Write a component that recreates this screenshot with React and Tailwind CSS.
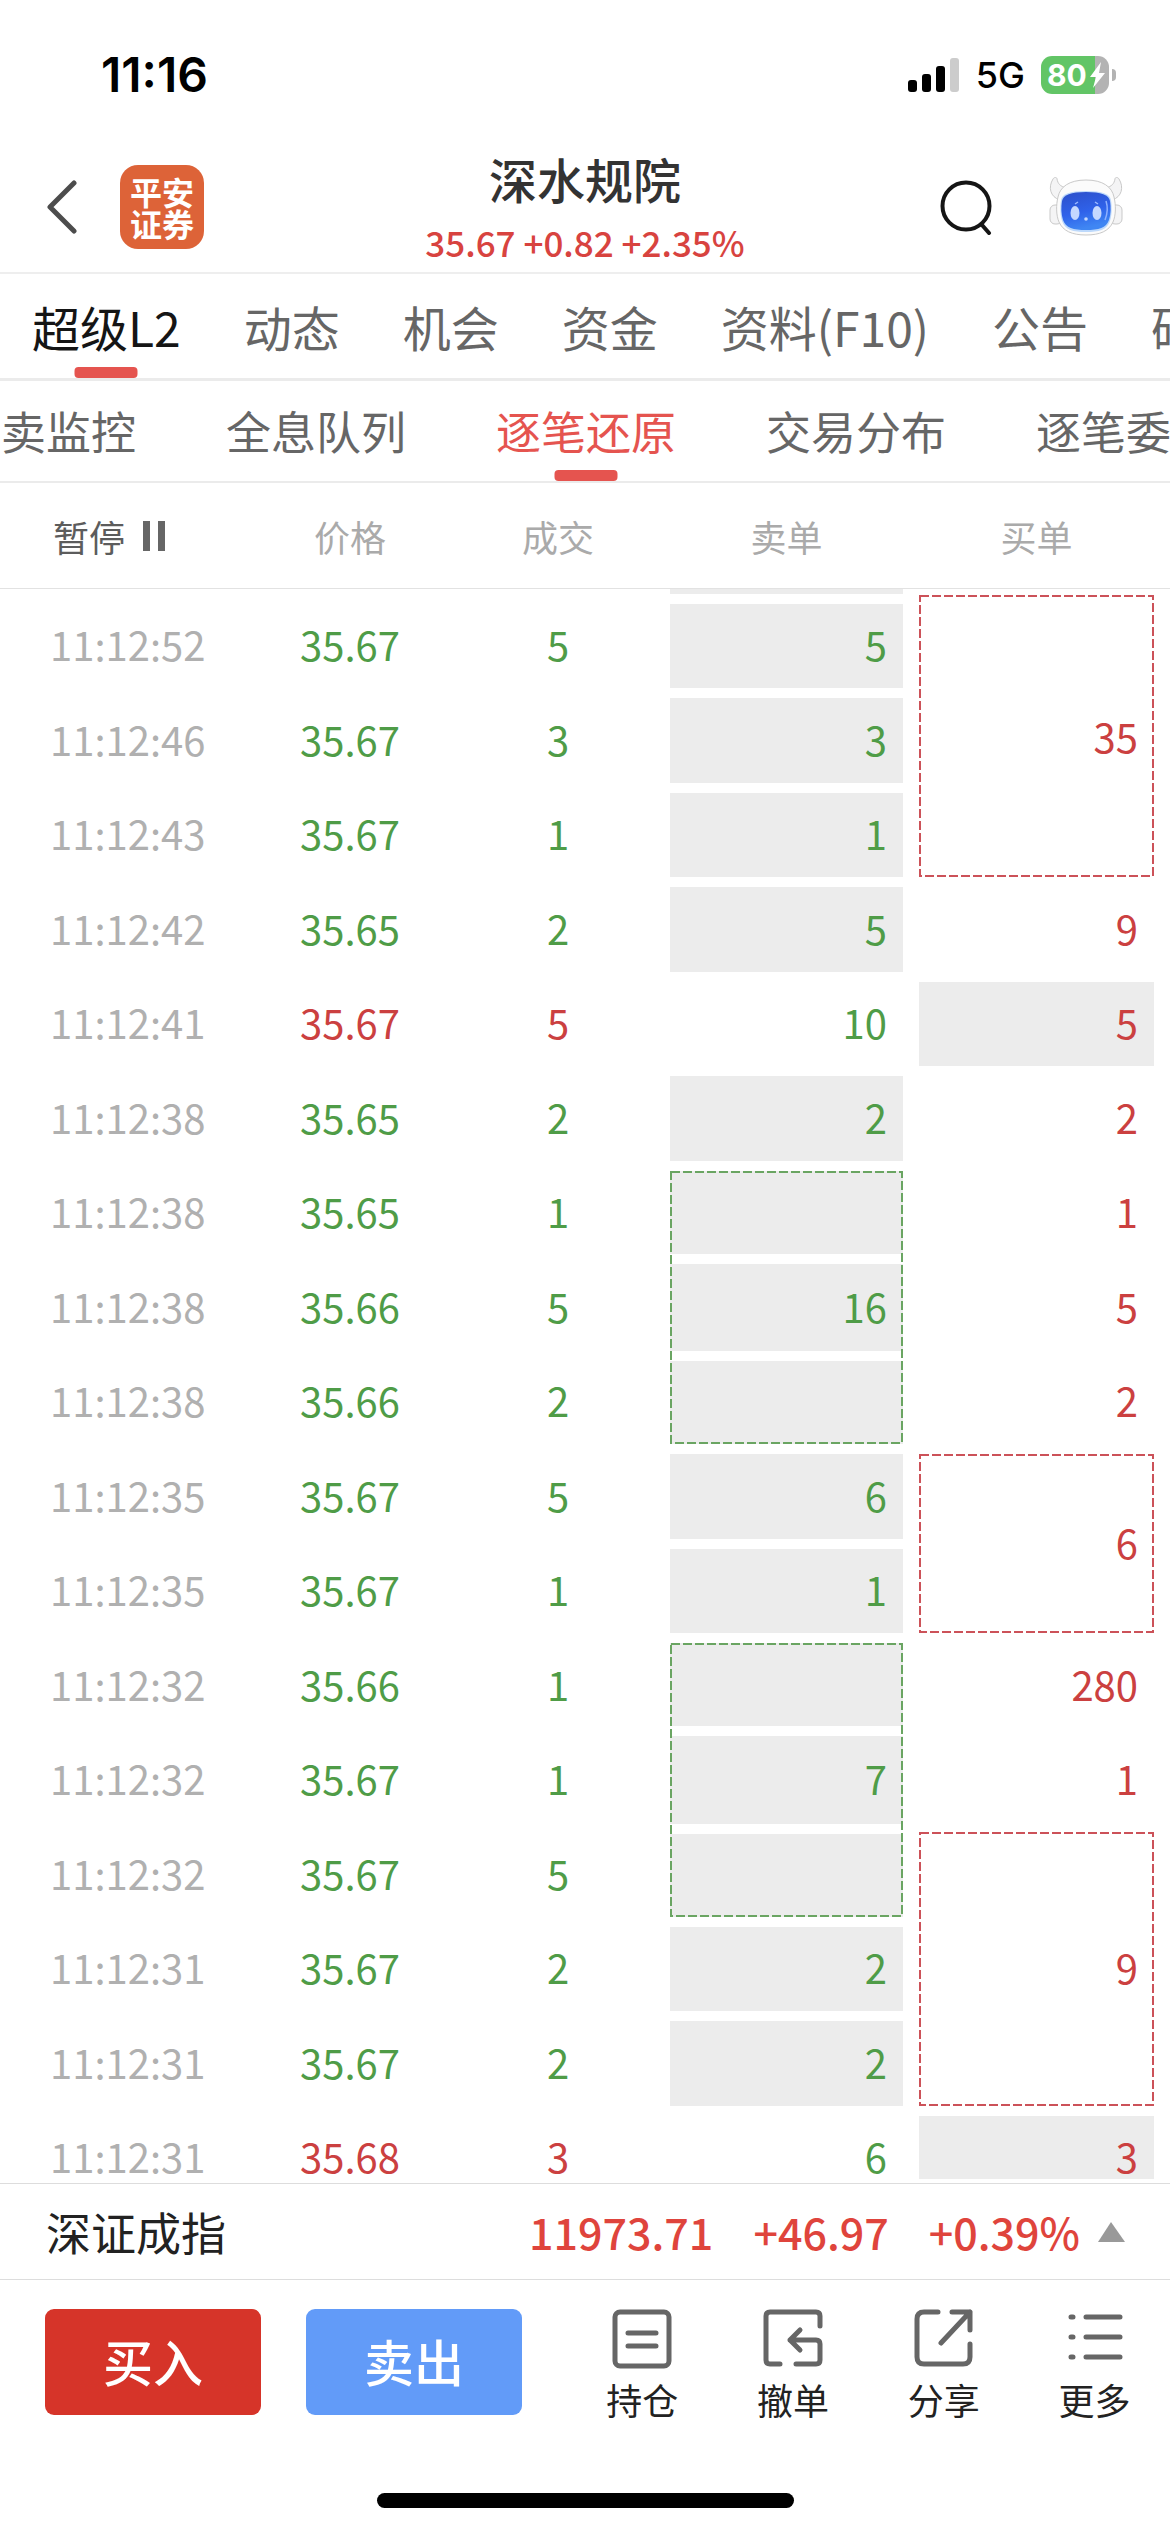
import React from "react";

const primaryTabs = ["超级L2", "动态", "机会", "资金", "资料(F10)", "公告", "研报"];
const secondaryTabs = ["买卖监控", "全息队列", "逐笔还原", "交易分布", "逐笔委托"];

// sell / buy: v = volume, fill = shaded block, span = rows merged in a dashed frame
const rows = [
  { t: "11:12:52", p: "35.67", n: 5, sell: { v: 5, fill: true } },
  { t: "11:12:46", p: "35.67", n: 3, sell: { v: 3, fill: true } },
  { t: "11:12:43", p: "35.67", n: 1, sell: { v: 1, fill: true } },
  { t: "11:12:42", p: "35.65", n: 2, sell: { v: 5, fill: true }, buy: { v: 9 } },
  { t: "11:12:41", p: "35.67", n: 5, up: true, sell: { v: 10 }, buy: { v: 5, fill: true } },
  { t: "11:12:38", p: "35.65", n: 2, sell: { v: 2, fill: true }, buy: { v: 2 } },
  { t: "11:12:38", p: "35.65", n: 1, sell: { v: 16, span: 3 }, buy: { v: 1 } },
  { t: "11:12:38", p: "35.66", n: 5, buy: { v: 5 } },
  { t: "11:12:38", p: "35.66", n: 2, buy: { v: 2 } },
  { t: "11:12:35", p: "35.67", n: 5, sell: { v: 6, fill: true }, buy: { v: 6, span: 2 } },
  { t: "11:12:35", p: "35.67", n: 1, sell: { v: 1, fill: true } },
  { t: "11:12:32", p: "35.66", n: 1, sell: { v: 7, span: 3 }, buy: { v: 280 } },
  { t: "11:12:32", p: "35.67", n: 1, buy: { v: 1 } },
  { t: "11:12:32", p: "35.67", n: 5, buy: { v: 9, span: 3 } },
  { t: "11:12:31", p: "35.67", n: 2, sell: { v: 2, fill: true } },
  { t: "11:12:31", p: "35.67", n: 2, sell: { v: 2, fill: true } },
  { t: "11:12:31", p: "35.68", n: 3, up: true, sell: { v: 6 }, buy: { v: 3, fill: true } },
];

const spanClass = { 2: "row-span-2", 3: "row-span-3" };

function Dashes({ color }) {
  return (
    <svg className="pointer-events-none absolute inset-0 h-full w-full" aria-hidden="true">
      <rect x="1" y="1" className="h-[calc(100%-2px)] w-[calc(100%-2px)]" fill="none" stroke={color} strokeWidth="2" strokeDasharray="9 3" />
    </svg>
  );
}

function SellCell({ cell }) {
  if (cell.span) {
    return (
      <td rowSpan={3} className="row-span-3 px-2 py-[5px] text-[#4f9c47]">
        <div className="relative flex h-full flex-col gap-[10px]">
          <div className="flex-1 bg-[#ececec]" />
          <div className="flex flex-1 items-center justify-end bg-[#ececec] pr-4 pb-1">{cell.v}</div>
          <div className="flex-1 bg-[#ececec]" />
          <Dashes color="#6aa562" />
        </div>
      </td>
    );
  }
  return (
    <td className="px-2 py-[5px] text-[#4f9c47]">
      <div className={`flex h-full items-center justify-end pr-4 pb-1 ${cell.fill ? "bg-[#ececec]" : ""}`}>{cell.v}</div>
    </td>
  );
}

function BuyCell({ cell }) {
  return (
    <td rowSpan={cell.span || 1} className={`py-[5px] pr-4 pl-2 text-[#cb4040] ${spanClass[cell.span] || ""}`}>
      <div className={`relative flex h-full items-center justify-end pr-4 pb-1 ${cell.fill ? "bg-[#ececec]" : ""}`}>
        {cell.v}
        {cell.span && <Dashes color="#cc5259" />}
      </div>
    </td>
  );
}

function StatusBar() {
  return (
    <div className="flex h-[142px] shrink-0 items-center justify-between pt-2 pr-[54px] pl-[101px] font-['Inter',sans-serif] text-black">
      <span className="text-[48px] font-semibold">11:16</span>
      <div className="flex items-center">
        <svg width="52" height="36" viewBox="0 0 52 36" aria-label="信号">
          <rect x="0" y="23" width="9" height="12" rx="3" />
          <rect x="14" y="17" width="9" height="18" rx="3" />
          <rect x="28" y="9" width="9" height="26" rx="3" />
          <rect x="42" y="1" width="9" height="34" rx="3" fill="#cccccc" />
        </svg>
        <span className="ml-4 text-[36px] font-medium">5G</span>
        <div className="ml-4 flex items-center gap-[3px]">
          <div className="flex h-[38px] w-[68px] items-center gap-0.5 rounded-[11px] bg-linear-to-r from-[#62c566] from-80% to-[#b3b3b3] to-80% pl-1.5 text-[30px] font-bold text-white">
            80
            <svg width="17" height="26" viewBox="0 0 17 26" aria-hidden="true" className="shrink-0">
              <path d="M12 0 1 15h6L4 26 16 11h-6z" fill="#fff" />
            </svg>
          </div>
          <div className="h-3 w-1 rounded-r-full bg-[#b3b3b3]" />
        </div>
      </div>
    </div>
  );
}

function Robot() {
  return (
    <svg width="74" height="60" viewBox="0 0 74 60" aria-hidden="true">
      <defs>
        <linearGradient id="visor" x1="0" y1="0" x2="0.3" y2="1">
          <stop offset="0" stopColor="#2c4fc9" />
          <stop offset="0.6" stopColor="#2f62ea" />
          <stop offset="1" stopColor="#3f86f3" />
        </linearGradient>
      </defs>
      <g fill="#f4f4f5" stroke="#c9c9c9" strokeWidth="1">
        <path d="M11 23C1 20-1 10 4 2c1-2 4-2 4 0 1 5 3 7 9 9z" />
        <path d="M63 23c10-3 12-13 7-21-1-2-4-2-4 0-1 5-3 7-9 9z" />
        <rect x="1" y="28" width="12" height="19" rx="5" />
        <rect x="61" y="28" width="12" height="19" rx="5" />
        <path d="M37 3c17 0 26 7 28 17 2 8 2 18-1 25-4 9-13 13-27 13S14 54 10 45C7 38 7 28 9 20 11 10 20 3 37 3z" fill="#fbfbfb" />
      </g>
      <path d="M37 14c16 0 24 3 25 9s1 15-1 21c-3 9-11 11-24 11s-21-2-24-11c-2-6-2-15-1-21s9-9 25-9z" fill="#bdd9fb" />
      <path d="M37 15c15 0 23 3 24 9s1 13-1 19c-3 8-10 10-23 10s-20-2-23-10c-2-6-2-13-1-19s9-9 24-9z" fill="url(#visor)" />
      <path d="M57 24c2 6 1 14-1 19" stroke="#8fb1ff" strokeWidth="1.5" fill="none" />
      <g fill="#c5d8ff">
        <ellipse cx="26" cy="36" rx="4.5" ry="7" />
        <ellipse cx="48" cy="36" rx="4.5" ry="7" />
        <circle cx="37" cy="42" r="1.8" />
      </g>
      <path d="M26 27l3-2M46 25l3 2" stroke="#9dbaff" strokeWidth="1.5" />
    </svg>
  );
}

function Header() {
  return (
    <header className="grid shrink-0 grid-cols-[1fr_auto_1fr] items-center border-b-2 border-[#eeeeee]">
      <div className="flex items-center gap-[43px] pl-[46px]">
        <button aria-label="返回">
          <svg width="31" height="54" viewBox="0 0 31 54" fill="none" stroke="#4c4c4c" strokeWidth="5" strokeLinecap="round" strokeLinejoin="round">
            <path d="M28 3 4 27l24 24" />
          </svg>
        </button>
        <div className="flex h-[84px] w-[84px] items-center justify-center rounded-[18px] bg-[#dd6338] text-center text-[32px] leading-[32px] font-bold text-white">
          平安
          <br />
          证券
        </div>
      </div>
      <div className="h-[130px] pt-1 text-center">
        <h1 className="text-[48px] leading-[64px] font-medium text-[#333333]">深水规院</h1>
        <p className="text-[35px] leading-[64px] font-medium text-[#d8433f]">35.67 +0.82 +2.35%</p>
      </div>
      <div className="flex items-center justify-end gap-[56px] pr-[47px]">
        <button aria-label="搜索">
          <svg width="53" height="55" viewBox="0 0 53 55" fill="none" stroke="#151515" strokeWidth="4" strokeLinecap="round">
            <circle cx="26" cy="26" r="23.5" />
            <path d="m42 45 7 8" />
          </svg>
        </button>
        <button aria-label="智能助手">
          <Robot />
        </button>
      </div>
    </header>
  );
}

function Tab({ label, active, activeText }) {
  return (
    <button className={`relative flex h-full shrink-0 items-center justify-center whitespace-nowrap ${active ? activeText : "text-[#666666]"}`}>
      {label}
      {active && <span className="absolute bottom-0 left-1/2 h-[11px] w-[63px] -translate-x-1/2 rounded-[4px] bg-[#e5544f]" />}
    </button>
  );
}

const actions = [
  {
    label: "持仓",
    icon: (
      <>
        <rect x="3" y="3" width="54" height="54" rx="5" />
        <path d="M16 24h28M16 37h28" />
      </>
    ),
  },
  {
    label: "撤单",
    icon: (
      <>
        <path d="M57 17V7q0-4-4-4H7Q3 3 3 7v44q0 4 4 4h10" />
        <path d="M33 55h20q4 0 4-4V35q0-4-4-4H27M37 21 27 31l10 10" />
      </>
    ),
  },
  {
    label: "分享",
    icon: (
      <>
        <path d="M24 3H10Q3 3 3 10v38q0 7 7 7h39q7 0 7-7V35" />
        <path d="M38 3h18v18M56 3 27 34" />
      </>
    ),
  },
  {
    label: "更多",
    icon: <path d="M6 8h2M6 28h2M6 48h2M21 8h34M21 28h34M21 48h34" />,
  },
];

export default function App() {
  return (
    <div className="flex h-screen flex-col overflow-hidden bg-white font-['Noto_Sans_CJK_SC',sans-serif]">
      <StatusBar />
      <Header />

      <nav className="flex h-[107px] shrink-0 gap-[63px] overflow-hidden border-b-3 border-[#ebebeb] pl-8 text-[48px]">
        {primaryTabs.map((label, i) => (
          <Tab key={label} label={label} active={i === 0} activeText="text-[#151515]" />
        ))}
      </nav>
      <nav className="flex h-[102px] shrink-0 overflow-hidden border-b-2 border-[#ebebeb] text-[45px]">
        <div className="-ml-11 flex gap-[90px]">
          {secondaryTabs.map((label, i) => (
            <Tab key={label} label={label} active={i === 2} activeText="text-[#e5544f]" />
          ))}
        </div>
      </nav>

      <main className="min-h-0 flex-1 overflow-hidden">
        <table className="grid auto-rows-[94px_95px] grid-cols-[246fr_208fr_208fr_249fr_259fr] grid-rows-[106px_10px] text-[40px] leading-[60px]">
          <thead className="contents">
            <tr className="contents text-[36px] text-[#aaaaaa]">
              <th className="flex items-center border-b border-[#e2e2e2] pl-[53px] font-normal">
                <button className="flex items-center gap-[18px] text-[#5c5c5c]">
                  暂停
                  <span className="flex gap-2" aria-hidden="true">
                    <span className="h-[30px] w-[7px] bg-[#666666]" />
                    <span className="h-[30px] w-[7px] bg-[#666666]" />
                  </span>
                </button>
              </th>
              <th className="flex items-center justify-center border-b border-[#e2e2e2] font-normal">价格</th>
              <th className="flex items-center justify-center border-b border-[#e2e2e2] font-normal">成交</th>
              <th className="flex items-center justify-center border-b border-[#e2e2e2] font-normal">卖单</th>
              <th className="flex items-center justify-center border-b border-[#e2e2e2] pr-2 font-normal">买单</th>
            </tr>
          </thead>
          <tbody className="contents">
            <tr className="contents">
              <td colSpan={3} className="col-span-3" />
              <td className="px-2 pb-[5px]">
                <div className="h-full bg-[#ececec]" />
              </td>
              <td rowSpan={4} className="row-span-4 pt-1.5 pr-4 pb-[5px] pl-2 text-[#cb4040]">
                <div className="relative flex h-full items-center justify-end pr-4">
                  35
                  <Dashes color="#cc5259" />
                </div>
              </td>
            </tr>
            {rows.map((r, i) => (
              <tr key={i} className="contents">
                <td className="flex items-center pb-1 pl-[50px] text-[#b0b0b0]">{r.t}</td>
                <td className={`flex items-center justify-center pb-1 ${r.up ? "text-[#cb4040]" : "text-[#4f9c47]"}`}>{r.p}</td>
                <td className={`flex items-center justify-center pb-1 ${r.up ? "text-[#cb4040]" : "text-[#4f9c47]"}`}>{r.n}</td>
                {r.sell && <SellCell cell={r.sell} />}
                {r.buy && <BuyCell cell={r.buy} />}
              </tr>
            ))}
          </tbody>
        </table>
      </main>

      <section className="mt-1 flex h-[96px] shrink-0 items-center border-t border-[#dddddd] pr-[45px] pl-[46px] text-[45px]">
        <span className="flex-1 text-[#222222]">深证成指</span>
        <div className="flex items-center gap-10 text-[43px] font-medium text-[#df443c]">
          <span>11973.71</span>
          <span>+46.97</span>
          <span>+0.39%</span>
        </div>
        <svg className="ml-[18px]" width="27" height="20" viewBox="0 0 27 20" aria-hidden="true">
          <path d="M13 0 27 20H0z" fill="#999999" />
        </svg>
      </section>

      <footer className="shrink-0 border-t border-[#dddddd] pt-[29px] pb-6">
        <div className="flex items-start pl-[45px]">
          <button className="h-[106px] w-[216px] rounded-[9px] bg-[#d63429] pb-1 text-[50px] font-medium text-white">买入</button>
          <button className="ml-[45px] h-[106px] w-[216px] rounded-[9px] bg-[#629bf8] pb-1 text-[50px] font-medium text-white">卖出</button>
          <div className="ml-[45px] grid flex-1 grid-cols-4">
            {actions.map((a) => (
              <button key={a.label} className="flex flex-col items-center gap-1.5 text-[36px] leading-[48px] text-[#222222]">
                <svg width="60" height="60" viewBox="0 0 60 60" fill="none" stroke="#666666" strokeWidth="5" strokeLinecap="round" strokeLinejoin="round" aria-hidden="true">
                  {a.icon}
                </svg>
                {a.label}
              </button>
            ))}
          </div>
        </div>
        <div className="mx-auto mt-[70px] h-[15px] w-[417px] rounded-full bg-black" />
      </footer>
    </div>
  );
}
